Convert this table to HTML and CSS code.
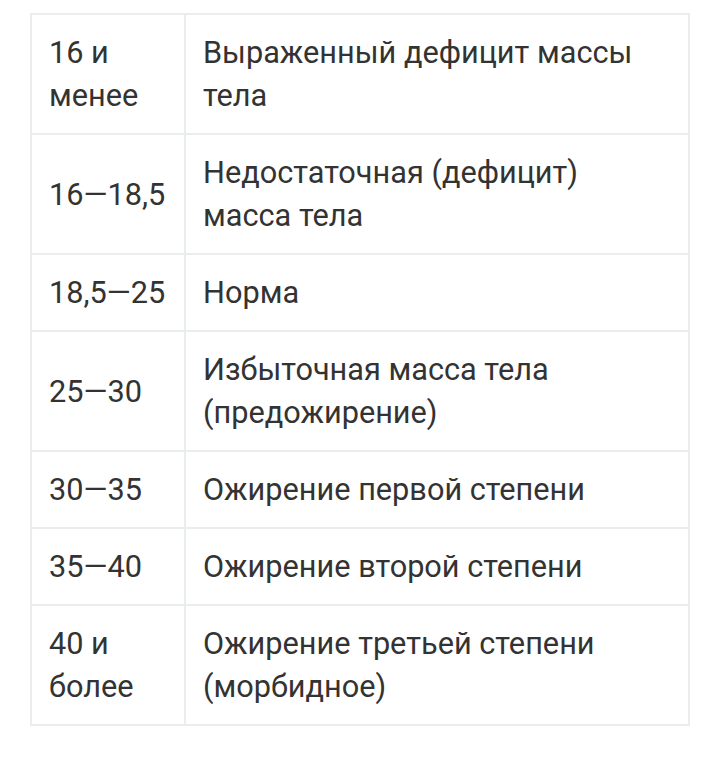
FILE: index.html
```html
<!DOCTYPE html>
<html lang="ru">
<head>
<meta charset="utf-8">
<link rel="stylesheet" href="styles.css">
</head>
<body>
<table class="bmi">
  <tr><td class="c1">16 и менее</td><td class="c2">Выраженный дефицит массы тела</td></tr>
  <tr><td class="c1">16—18,5</td><td class="c2">Недостаточная (дефицит) масса тела</td></tr>
  <tr><td class="c1">18,5—25</td><td class="c2">Норма</td></tr>
  <tr><td class="c1">25—30</td><td class="c2">Избыточная масса тела (предожирение)</td></tr>
  <tr><td class="c1">30—35</td><td class="c2">Ожирение первой степени</td></tr>
  <tr><td class="c1">35—40</td><td class="c2">Ожирение второй степени</td></tr>
  <tr><td class="c1">40 и более</td><td class="c2">Ожирение третьей степени (морбидное)</td></tr>
</table>
</body>
</html>
```
FILE: styles.css
```css
html, body {
  margin: 0;
  padding: 0;
  background: #ffffff;
}
body {
  padding: 13px 30px 0 30px;
  font-family: Roboto, "Noto Sans", sans-serif;
  color: #333333;
}
.bmi {
  width: 660px;
  border-collapse: collapse;
  border: 2px solid #e9eded;
  font-size: 30.7px;
  line-height: 43px;
}
.bmi td {
  border: 2px solid #e9eded;
  padding: 16px 17px;
  vertical-align: middle;
  text-align: left;
}
.c1 {
  width: 118px;
}
```
